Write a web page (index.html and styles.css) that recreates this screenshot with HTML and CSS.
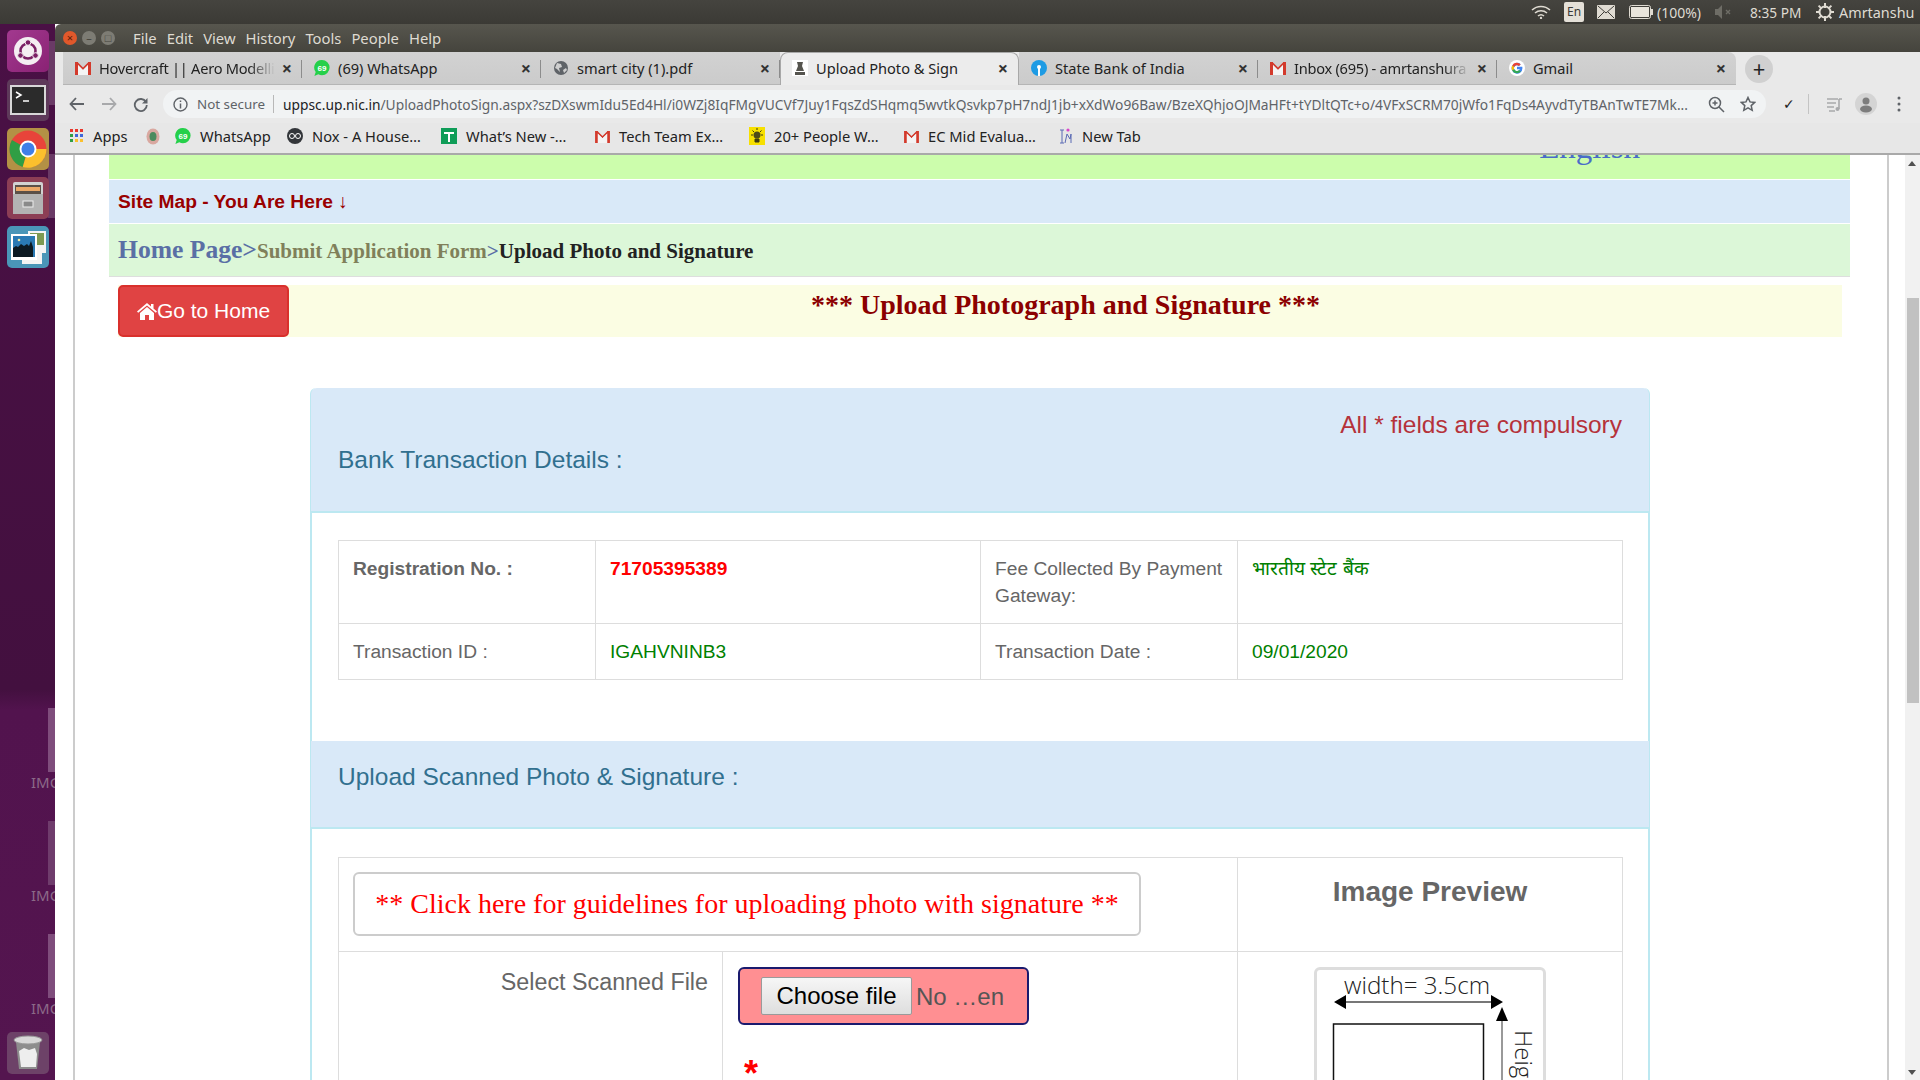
FILE: index.html
```html
<!DOCTYPE html>
<html lang="en">
<head>
    <meta charset="UTF-8">
    <title>Upload Photo &amp; Sign</title>
    <link rel="stylesheet" href="styles.css">
</head>
<body>
    <svg class="defs" width="0" height="0">
        <symbol id="gmail" viewBox="0 0 16 14">
            <path d="M0 1h3v13H0zM13 1h3v13h-3z" fill="#d33a2c"/>
            <path d="M0 1h2.500L8 6.500 13.500 1H16L8 9z" fill="#d33a2c"/>
            <path d="M3 4l5 5 5-5v10H3z" fill="#f4f4f4"/>
        </symbol>
        <symbol id="whatsapp" viewBox="0 0 16 16">
            <path d="M8 0a7.600 7.600 0 0 1 0 15.200c-1.300 0-2.600-.3-3.700-1L.4 16l1.300-3.900A7.600 7.600 0 0 1 8 0z" fill="#25d04a"/>
            <text x="8" y="10.800" text-anchor="middle" font-size="8" font-family="Liberation Sans" fill="#fff" font-weight="bold">69</text>
        </symbol>
    </svg>

    <div class="desktop">
        <div class="topbar">
            <svg class="tray-wifi" width="20" height="14" viewBox="0 0 20 14"><path d="M1 5a13 13 0 0 1 18 0M4 8a9 9 0 0 1 12 0M7 11a4.500 4.500 0 0 1 6 0" fill="none" stroke="#dfdbd2" stroke-width="1.500"/><circle cx="10" cy="13" r="1.200" fill="#dfdbd2"/></svg>
            <span class="tray-lang">En</span>
            <svg class="tray-mail" width="18" height="14" viewBox="0 0 18 14"><rect width="18" height="14" rx="1" fill="#dfdbd2"/><path d="M1 1l8 7 8-7M1 13l6-6M17 13l-6-6" fill="none" stroke="#3f3e39"/></svg>
            <svg class="tray-battery" width="24" height="14" viewBox="0 0 24 14"><rect x=".5" y=".5" width="21" height="13" rx="2" fill="#3f3e39" stroke="#dfdbd2"/><rect x="2" y="2" width="18" height="10" fill="#e9e5dc"/><rect x="22" y="4" width="2" height="6" fill="#dfdbd2"/></svg>
            <span class="tray-text tray-percent">(100%)</span>
            <svg class="tray-volume" width="18" height="14" viewBox="0 0 18 14"><path d="M0 4h3l4-4v14l-4-4H0z" fill="#6e6d66"/><path d="M11 5l4 4M15 5l-4 4" stroke="#6e6d66" stroke-width="1.400"/></svg>
            <span class="tray-text tray-time">8:35 PM</span>
            <svg class="tray-gear" width="18" height="18" viewBox="0 0 18 18"><circle cx="9" cy="9" r="5.500" fill="none" stroke="#dfdbd2" stroke-width="2"/><path d="M9 0v5M9 13v5M0 9h4M14 9h4M2.600 2.600l3 3M12.400 12.400l3 3M15.400 2.600l-3 3M5.600 12.400l-3 3" stroke="#dfdbd2" stroke-width="2"/></svg>
            <span class="tray-text tray-user">Amrtanshu</span>
        </div>

        <div class="workspace">
            <div class="launcher">
                <div class="desk-item item-top1"></div>
                <div class="desk-item item-top2"></div>
                <div class="desk-item item-a"></div>
                <div class="desk-item item-b"></div>
                <div class="desk-item item-c"></div>
                <span class="desk-label label-a">IMG</span>
                <span class="desk-label label-b">IMG</span>
                <span class="desk-label label-c">IMG</span>

                <div class="launch-icon icon-ubuntu">
                    <svg width="30" height="30" viewBox="0 0 30 30"><circle cx="15" cy="15" r="14" fill="#f4eef2"/><circle cx="15" cy="15" r="7.500" fill="none" stroke="#7a1f64" stroke-width="2.600"/><circle cx="15" cy="6.500" r="2.800" fill="#7a1f64" stroke="#f4eef2"/><circle cx="7.500" cy="19.500" r="2.800" fill="#7a1f64" stroke="#f4eef2"/><circle cx="22.500" cy="19.500" r="2.800" fill="#7a1f64" stroke="#f4eef2"/></svg>
                </div>
                <div class="launch-icon icon-terminal">
                    <svg width="36" height="30" viewBox="0 0 36 30"><rect x="1" y="1" width="34" height="28" fill="#2b2b2b" stroke="#d8d8d8" stroke-width="2"/><path d="M6 7l5 3-5 3" fill="none" stroke="#fff" stroke-width="1.500"/><path d="M13 16h6" stroke="#fff" stroke-width="1.500"/></svg>
                </div>
                <div class="launch-icon icon-chrome">
                    <svg width="38" height="38" viewBox="0 0 36 36"><circle cx="18" cy="18" r="17.500" fill="#e8443a"/><path d="M18 18L2.800 9.500A17.500 17.500 0 0 0 13 35z" fill="#2f9e44"/><path d="M18 18h17.500A17.500 17.500 0 0 1 13 35z" fill="#fbc02d"/><circle cx="18" cy="18" r="8" fill="#fff"/><circle cx="18" cy="18" r="6.200" fill="#3f7fe8"/></svg>
                </div>
                <div class="launch-icon icon-files">
                    <svg width="32" height="34" viewBox="0 0 32 34"><rect x="1" y="1" width="30" height="32" rx="2" fill="#d2d2d2"/><rect x="3" y="4" width="26" height="9" fill="#5b5048"/><path d="M4 6h24v4H4z" fill="#eba868"/><path d="M1 13h30v20H1z" fill="#b3b3b3"/><rect x="11" y="20" width="10" height="6" fill="#8a8a8a" stroke="#eee"/></svg>
                </div>
                <div class="launch-icon icon-photos">
                    <svg width="36" height="34" viewBox="0 0 36 34"><rect x="18" y="1" width="18" height="22" fill="#f4f4f4"/><rect x="20" y="3" width="14" height="12" fill="#7d9a52"/><rect x="12" y="16" width="20" height="18" fill="#f4f4f4"/><rect x="1" y="4" width="26" height="26" fill="#fff"/><rect x="3" y="6" width="22" height="21" fill="#2a7ab4"/><circle cx="9" cy="10" r="1.300" fill="#f1e9a2"/><path d="M3 27v-9l3-2 2 1 3-3 3 2 3-2 2 2 2-5 2 6v10z" fill="#0c1a22"/></svg>
                </div>
                <div class="launch-icon icon-trash">
                    <svg width="30" height="36" viewBox="0 0 30 36"><path d="M3 7l3 27h18l3-27z" fill="#8d8d8d"/><ellipse cx="15" cy="5" rx="14" ry="4" fill="#d8d8d8" stroke="#999"/><path d="M6 16l5-3 5 2 6-2 2 6-1 13H8z" fill="#eee"/></svg>
                </div>
            </div>

            <div class="browser">
                <div class="titlebar">
                    <span class="win-btn win-close">&#215;</span>
                    <span class="win-btn win-min">&#8211;</span>
                    <span class="win-btn win-max">&#9633;</span>
                    <nav class="app-menu">
                        <span>File</span><span>Edit</span><span>View</span><span>History</span><span>Tools</span><span>People</span><span>Help</span>
                    </nav>
                </div>

                <div class="tabstrip">
                    <div class="tab">
                        <svg class="tab-icon" width="16" height="14"><use href="#gmail"/></svg>
                        <span class="tab-title fade">Hovercraft || Aero Modelli</span><span class="tab-close">&#215;</span>
                    </div>
                    <div class="tab">
                        <svg class="tab-icon" width="16" height="16"><use href="#whatsapp"/></svg>
                        <span class="tab-title">(69) WhatsApp</span><span class="tab-close">&#215;</span>
                    </div>
                    <div class="tab">
                        <svg class="tab-icon" width="16" height="16" viewBox="0 0 16 16"><circle cx="8" cy="8" r="7" fill="#5f6368"/><path d="M4 3l4 1 1 3-3 1 1 4-3-3-2-1zM10 10l3-2 1 2-3 3z" fill="#cfcfcf"/></svg>
                        <span class="tab-title">smart city (1).pdf</span><span class="tab-close">&#215;</span>
                    </div>
                    <div class="tab tab-active">
                        <svg class="tab-icon" width="16" height="16" viewBox="0 0 16 16"><rect width="16" height="16" fill="#fff"/><path d="M5 2h6l-1 4 2 5H4l2-5zM3 12h10v3H3z" fill="#55544e"/></svg>
                        <span class="tab-title">Upload Photo &amp; Sign</span><span class="tab-close">&#215;</span>
                    </div>
                    <div class="tab">
                        <svg class="tab-icon" width="16" height="16" viewBox="0 0 16 16"><circle cx="8" cy="8" r="8" fill="#1e9be4"/><circle cx="8" cy="7" r="2" fill="#fff"/><rect x="7" y="8" width="2" height="8" fill="#fff"/></svg>
                        <span class="tab-title">State Bank of India</span><span class="tab-close">&#215;</span>
                    </div>
                    <div class="tab">
                        <svg class="tab-icon" width="16" height="14"><use href="#gmail"/></svg>
                        <span class="tab-title fade">Inbox (695) - amrtanshura</span><span class="tab-close">&#215;</span>
                    </div>
                    <div class="tab tab-last">
                        <svg class="tab-icon" width="16" height="16" viewBox="0 0 16 16"><circle cx="8" cy="8" r="8" fill="#fff"/><path d="M13 6.800H8v2.500h2.800a3 3 0 1 1-.8-3.300l1.700-1.700A5.400 5.400 0 1 0 13.400 8c0-.4 0-.8-.1-1.200z" fill="#4285f4"/><path d="M3.200 5.400l2 1.500A3 3 0 0 1 10 6l1.700-1.700a5.400 5.400 0 0 0-8.500 1.100z" fill="#ea4335"/><path d="M3.200 10.600l2-1.500a3 3 0 0 0 4.900 1l1.800 1.500a5.400 5.400 0 0 1-8.700-1z" fill="#34a853"/><path d="M2.600 8c0-1 .2-1.800.6-2.600l2 1.500a3 3 0 0 0 0 2.200l-2 1.500A5.400 5.400 0 0 1 2.600 8z" fill="#fbbc05"/></svg>
                        <span class="tab-title">Gmail</span><span class="tab-close">&#215;</span>
                    </div>
                    <span class="newtab">+</span>
                </div>

                <div class="toolbar">
                    <svg class="tool-back" width="16" height="14" viewBox="0 0 16 14"><path d="M15 7H2M7 1L1.500 7 7 13" fill="none" stroke="#5f6368" stroke-width="1.800"/></svg>
                    <svg class="tool-forward" width="16" height="14" viewBox="0 0 16 14"><path d="M1 7h13M9 1l5.500 6L9 13" fill="none" stroke="#a8a9ab" stroke-width="1.800"/></svg>
                    <svg class="tool-reload" width="15" height="15" viewBox="0 0 15 15"><path d="M13 5a6 6 0 1 0 .8 3" fill="none" stroke="#5f6368" stroke-width="1.800"/><path d="M14.500 1v5.500H9z" fill="#5f6368"/></svg>
                    <div class="omnibox">
                        <svg class="omni-info" width="15" height="15" viewBox="0 0 15 15"><circle cx="7.500" cy="7.500" r="6.500" fill="none" stroke="#5f6368" stroke-width="1.400"/><path d="M7.500 6.500v5M7.500 3.500v1.600" stroke="#5f6368" stroke-width="1.500"/></svg>
                        <span class="omni-secure">Not secure</span>
                        <span class="omni-url"><b>uppsc.up.nic.in</b>/UploadPhotoSign.aspx?szDXswmIdu5Ed4Hl/i0WZj8IqFMgVUCVf7Juy1FqsZdSHqmq5wvtkQsvkp7pH7ndJ1jb+xXdWo96Baw/BzeXQhjoOJMaHFt+tYDltQTc+o/4VFxSCRM70jWfo1FqDs4AyvdTyTBAnTwTE7Mk...</span>
                        <svg class="omni-zoom" width="17" height="17" viewBox="0 0 17 17"><circle cx="7" cy="7" r="5.500" fill="none" stroke="#5f6368" stroke-width="1.500"/><path d="M11 11l5 5M4.500 7h5M7 4.500v5" stroke="#5f6368" stroke-width="1.500"/></svg>
                        <svg class="omni-star" width="16" height="16" viewBox="0 0 16 16"><path d="M8 1.500l2 4.400 4.700.5-3.500 3.200 1 4.700L8 11.900l-4.200 2.400 1-4.700L1.300 6.400 6 5.900z" fill="none" stroke="#5f6368" stroke-width="1.500"/></svg>
                    </div>
                    <span class="tool-check">&#10003;</span>
                    <span class="tool-sep"></span>
                    <svg class="tool-media" width="16" height="15" viewBox="0 0 16 15"><path d="M0 2h11M0 6h9M0 10h7M2 14h6M12 2h3M12 2v10" fill="none" stroke="#a8a9ab" stroke-width="1.600"/><circle cx="10.500" cy="12" r="2" fill="#a8a9ab"/></svg>
                    <svg class="tool-avatar" width="22" height="22" viewBox="0 0 22 22"><circle cx="11" cy="11" r="11" fill="#d4d4d4"/><circle cx="11" cy="8" r="3.500" fill="#7d7d7d"/><ellipse cx="11" cy="16" rx="6" ry="3.500" fill="#7d7d7d"/></svg>
                    <svg class="tool-dots" width="4" height="16" viewBox="0 0 4 16"><circle cx="2" cy="2" r="1.500" fill="#5f6368"/><circle cx="2" cy="8" r="1.500" fill="#5f6368"/><circle cx="2" cy="14" r="1.500" fill="#5f6368"/></svg>
                </div>

                <div class="bookmarks">
                    <span class="bookmark bm-apps">
                        <svg width="14" height="14" viewBox="0 0 14 14"><path d="M0 0h3v3H0z" fill="#e8372c"/><path d="M5 0h3v3H5z" fill="#e8372c"/><path d="M10 0h3v3h-3z" fill="#e8372c"/><path d="M0 5h3v3H0z" fill="#2f9e44"/><path d="M5 5h3v3H5z" fill="#3f66d8"/><path d="M10 5h3v3h-3z" fill="#3f66d8"/><path d="M0 10h3v3H0z" fill="#2f9e44"/><path d="M5 10h3v3H5z" fill="#fbc02d"/><path d="M10 10h3v3h-3z" fill="#fbc02d"/></svg>
                        Apps
                    </span>
                    <span class="bookmark bm-emblem">
                        <svg width="14" height="17" viewBox="0 0 14 17"><ellipse cx="7" cy="8.500" rx="6.500" ry="8" fill="#d9a8a0"/><ellipse cx="7" cy="8.500" rx="3.500" ry="4.500" fill="#4d8b5e"/></svg>
                    </span>
                    <span class="bookmark bm-whatsapp"><svg width="16" height="16"><use href="#whatsapp"/></svg>WhatsApp</span>
                    <span class="bookmark bm-nox">
                        <svg width="16" height="16" viewBox="0 0 16 16"><circle cx="8" cy="8" r="8" fill="#33363a"/><circle cx="5" cy="8" r="2.500" fill="none" stroke="#fff"/><circle cx="11" cy="8" r="2.500" fill="none" stroke="#fff"/></svg>
                        Nox - A House…
                    </span>
                    <span class="bookmark bm-sheet">
                        <svg width="16" height="16" viewBox="0 0 16 16"><rect width="16" height="16" fill="#0f9d58"/><path d="M3 5h10M8 5v9" stroke="#fff" stroke-width="2"/></svg>
                        What’s New -…
                    </span>
                    <span class="bookmark bm-tech"><svg width="15" height="13"><use href="#gmail"/></svg>Tech Team Ex…</span>
                    <span class="bookmark bm-bulb">
                        <svg width="16" height="18" viewBox="0 0 16 18"><rect width="16" height="18" fill="#f7e000"/><circle cx="8" cy="8" r="3.500" fill="#4f4a18"/><path d="M6 12h4v3H6zM8 1v2M2 8h2M12 8h2M3.500 3.500l1.500 1.500M12.500 3.500L11 5" stroke="#3d3a12" fill="#3d3a12"/></svg>
                        20+ People W…
                    </span>
                    <span class="bookmark bm-ec"><svg width="15" height="13"><use href="#gmail"/></svg>EC Mid Evalua…</span>
                    <span class="bookmark bm-newtab">
                        <svg width="14" height="17" viewBox="0 0 14 17"><path d="M1 2h4M3 2v13M1 15h4M6 15l2-9 3 5 1-5v9" fill="none" stroke="#5a6ab4"/><circle cx="9" cy="2" r="1.600" fill="#d946c8"/></svg>
                        New Tab
                    </span>
                </div>

                <div class="viewport">
                    <div class="page">
                        <div class="lang-strip"><a class="lang-link">English</a></div>
                        <div class="sitemap-strip">Site Map - You Are Here ↓</div>
                        <div class="crumb-strip">
                            <span class="crumb-home">Home Page&gt;</span><span class="crumb-submit">Submit Application Form</span><span class="crumb-sep">&gt;</span><span class="crumb-current">Upload Photo and Signature</span>
                        </div>
                        <div class="title-row">
                            <button class="home-btn">
                                <svg width="20" height="18" viewBox="0 0 20 18"><path d="M10 1L0 9.500l1.200 1.300L10 3.400l8.800 7.400L20 9.500 16.500 6.500V2h-2.500v2.400z" fill="#fff"/><path d="M3 11l7-6 7 6v7h-5v-5H8v5H3z" fill="#fff"/></svg>Go to Home
                            </button>
                            <h2 class="page-title">*** Upload Photograph and Signature ***</h2>
                        </div>

                        <div class="panel">
                            <div class="panel-head head-bank">
                                <div class="compulsory">All * fields are compulsory</div>
                                <div class="panel-title">Bank Transaction Details :</div>
                            </div>
                            <div class="panel-body body-bank">
                                <table class="info-table">
                                    <colgroup>
                                        <col class="col-label">
                                        <col class="col-value">
                                        <col class="col-label">
                                        <col class="col-value">
                                    </colgroup>
                                    <tr class="row-tall">
                                        <td><b>Registration No. :</b></td>
                                        <td class="val-red">71705395389</td>
                                        <td>Fee Collected By Payment Gateway:</td>
                                        <td class="val-green">भारतीय स्टेट बैंक</td>
                                    </tr>
                                    <tr class="row-short">
                                        <td>Transaction ID :</td>
                                        <td class="val-green">IGAHVNINB3</td>
                                        <td>Transaction Date :</td>
                                        <td class="val-green">09/01/2020</td>
                                    </tr>
                                </table>
                            </div>
                            <div class="panel-head head-upload">
                                <div class="panel-title">Upload Scanned Photo &amp; Signature :</div>
                            </div>
                            <div class="panel-body body-upload">
                                <table class="upload-table">
                                    <colgroup>
                                        <col class="col-file-label">
                                        <col class="col-file">
                                        <col class="col-preview">
                                    </colgroup>
                                    <tr class="row-guide">
                                        <td colspan="2"><a class="guide-btn">** Click here for guidelines for uploading photo with signature **</a></td>
                                        <td class="preview-head">Image Preview</td>
                                    </tr>
                                    <tr>
                                        <td class="file-label">Select Scanned File</td>
                                        <td class="file-cell">
                                            <div class="file-box"><button class="file-btn">Choose file</button><span class="file-name">No …en</span></div>
                                            <div class="required">*</div>
                                        </td>
                                        <td class="preview-cell">
                                            <div class="preview-box">
                                                <svg width="226" height="200" viewBox="0 0 226 200">
                                                    <text x="27" y="24" class="spec-text" textLength="146" lengthAdjust="spacingAndGlyphs">width= 3.5cm</text>
                                                    <path d="M28 32h150" stroke="#777" stroke-width="2"/>
                                                    <path d="M17 32l12-7v14zM186 32l-12-7v14z" fill="#000"/>
                                                    <path d="M185 45v155" stroke="#777" stroke-width="1.500"/>
                                                    <path d="M185 37l-6 14h12z" fill="#000"/>
                                                    <rect x="16.500" y="54" width="150" height="160" fill="#fff" stroke="#111" stroke-width="1.500"/>
                                                    <text x="198" y="60" class="spec-text" transform="rotate(90 198 60)">Height</text>
                                                </svg>
                                            </div>
                                        </td>
                                    </tr>
                                </table>
                            </div>
                        </div>
                    </div>
                    <div class="scrollbar">
                        <span class="scroll-up"></span>
                        <span class="scroll-thumb"></span>
                        <span class="scroll-down"></span>
                    </div>
                </div>
            </div>
        </div>
    </div>
</body>
</html>
```

FILE: styles.css
```css
html, body {
    margin: 0;
    padding: 0;
    height: 100%;
    overflow: hidden;
}
body {
    font-family: 'Liberation Sans', Arial, sans-serif;
    background-color: #fff;
}
.defs {
    position: absolute;
}
.desktop {
    width: 1920px;
    height: 1080px;
    display: flex;
    flex-direction: column;
    overflow: hidden;
}

/* top panel */
.topbar {
    height: 24px;
    flex: none;
    display: flex;
    align-items: center;
    background: linear-gradient(#45443f, #3b3a35);
    font-family: 'Noto Sans', sans-serif;
    padding-left: 1531px;
}
.tray-text {
    color: #dfdbd2;
    font-size: 14px;
    white-space: nowrap;
}
.tray-lang {
    margin-left: 13px;
    width: 20px;
    height: 20px;
    background-color: #e4e0d8;
    color: #3c3b37;
    font-size: 12px;
    text-align: center;
    line-height: 20px;
    border-radius: 2px;
}
.tray-mail { margin-left: 13px; }
.tray-battery { margin-left: 14px; }
.tray-percent { margin-left: 4px; width: 46px; }
.tray-volume { margin-left: 12px; }
.tray-time { margin-left: 17px; width: 54px; font-size: 13.7px; }
.tray-gear { margin-left: 12px; }
.tray-user { margin-left: 5px; font-size: 14.4px; }

.workspace {
    flex: 1;
    display: flex;
    min-height: 0;
}

/* launcher */
.launcher {
    width: 55px;
    flex: none;
    position: relative;
    box-sizing: border-box;
    padding: 6px 0 0 7px;
    overflow: hidden;
    background: linear-gradient(#4a1045 0, #43103f 63%, #52134e 65%, #54154f 100%);
}
.launch-icon {
    width: 42px;
    height: 42px;
    margin-bottom: 7px;
    border-radius: 5px;
    display: flex;
    align-items: center;
    justify-content: center;
    position: relative;
}
.icon-ubuntu { background: linear-gradient(135deg, #a2398f, #8a2274); }
.icon-terminal { background-color: #5e3a5a; }
.icon-chrome { background-color: #b39145; }
.icon-files { background-color: #8c3e55; }
.icon-photos { background-color: #4a96b8; }
.icon-trash {
    background-color: #6d4268;
    position: absolute;
    left: 7px;
    top: 1008px;
}
.desk-item {
    position: absolute;
    left: 48px;
    width: 7px;
    height: 64px;
    background-color: #7f4d7c;
}
.item-top1 { top: 17px; background-color: #6a3a66; }
.item-top2 { top: 130px; background-color: #6a3a66; }
.item-a { top: 684px; }
.item-b { top: 797px; background-color: #6f3c6c; }
.item-c { top: 910px; }
.desk-label {
    position: absolute;
    left: 31px;
    font-family: 'Noto Sans', sans-serif;
    font-size: 15px;
    color: #8b6a88;
}
.label-a { top: 748px; }
.label-b { top: 861px; }
.label-c { top: 974px; }

/* browser window */
.browser {
    flex: 1;
    display: flex;
    flex-direction: column;
    min-width: 0;
    font-family: 'Noto Sans', sans-serif;
}
.titlebar {
    height: 28px;
    flex: none;
    display: flex;
    align-items: center;
    background: linear-gradient(#57564e, #45443d);
    border-radius: 6px 0 0 0;
    box-sizing: border-box;
    padding-left: 8px;
}
.win-btn {
    width: 14px;
    height: 14px;
    border-radius: 50%;
    margin-right: 5px;
    background-color: #7d7c74;
    color: #45443d;
    font-size: 11px;
    line-height: 14px;
    text-align: center;
}
.win-close { background-color: #e0582b; color: #5c1d08; }
.app-menu {
    margin-left: 13px;
    display: flex;
    gap: 10px;
    color: #dfdbd2;
    font-size: 14.8px;
}
.tabstrip {
    height: 33px;
    flex: none;
    display: flex;
    align-items: center;
    padding-left: 8px;
    background-color: #e9e9e9;
}
.tab {
    width: 239px;
    height: 33px;
    flex: none;
    box-sizing: border-box;
    display: flex;
    align-items: center;
    padding: 0 8px 0 12px;
    background: linear-gradient(#d2d2d2, #cbcbcb);
    border-bottom: 1px solid #b5b5b5;
    position: relative;
    color: #222;
    font-size: 14.6px;
}
.tab::after {
    content: "";
    position: absolute;
    right: 0;
    top: 8px;
    height: 18px;
    width: 1px;
    background-color: #8c8c8c;
}
.tab-last::after, .tab-active::after { display: none; }
.tab-last { border-radius: 0 8px 0 0; }
.tab-active {
    background: #ececec;
    border: 1px solid #a8a8a8;
    border-bottom: none;
    border-radius: 8px 8px 0 0;
    padding-bottom: 2px;
    padding-left: 11px;
}
.tab-icon {
    flex: none;
    margin-right: 8px;
}
.tab-title {
    flex: 1;
    overflow: hidden;
    white-space: nowrap;
}
.fade {
    letter-spacing: -0.25px;
    -webkit-mask-image: linear-gradient(to right, #000 85%, transparent 100%);
    mask-image: linear-gradient(to right, #000 85%, transparent 100%);
}
.tab-close {
    flex: none;
    width: 14px;
    margin-left: 5px;
    font-size: 18px;
    line-height: 18px;
    text-align: center;
    font-weight: bold;
    color: #333;
}
.newtab {
    width: 28px;
    height: 28px;
    margin-left: 9px;
    border-radius: 50%;
    background-color: #d0d0d0;
    text-align: center;
    font-size: 22px;
    line-height: 26px;
    color: #222;
}
.toolbar {
    height: 38px;
    flex: none;
    box-sizing: border-box;
    display: flex;
    align-items: center;
    background-color: #e9e9e9;
    padding-left: 14px;
}
.tool-forward { margin-left: 16px; }
.tool-reload { margin-left: 16px; }
.omnibox {
    width: 1603px;
    height: 28px;
    margin-left: 15px;
    box-sizing: border-box;
    flex: none;
    border-radius: 14px;
    background-color: #f1f3f4;
    display: flex;
    align-items: center;
    padding-left: 10px;
    white-space: nowrap;
}
.omni-secure {
    margin-left: 9px;
    padding-right: 8px;
    border-right: 1px solid #b8b8b8;
    color: #5f6368;
    font-size: 13.4px;
    line-height: 18px;
}
.omni-url {
    margin-left: 9px;
    width: 1408px;
    flex: none;
    overflow: hidden;
    color: #5f6368;
    font-size: 13.78px;
}
.omni-url b {
    font-weight: normal;
    color: #202124;
}
.omni-zoom { margin-left: 17px; }
.omni-star { margin-left: 15px; }
.tool-check {
    margin-left: 17px;
    font-size: 14px;
    color: #222;
    font-family: 'DejaVu Sans', sans-serif;
}
.tool-sep {
    margin-left: 13px;
    width: 1px;
    height: 20px;
    background-color: #c4c4c4;
}
.tool-media { margin-left: 18px; }
.tool-avatar { margin-left: 12px; }
.tool-dots { margin-left: 20px; }
.bookmarks {
    height: 32px;
    flex: none;
    box-sizing: border-box;
    display: flex;
    align-items: center;
    background-color: #e7e7e7;
    border-bottom: 2px solid #a9a9a9;
    padding-bottom: 4px;
    font-size: 14.7px;
    color: #222;
    white-space: nowrap;
}
.bookmark {
    display: flex;
    align-items: center;
    gap: 9px;
    flex: none;
}
.bm-apps { margin-left: 15px; width: 76px; }
.bm-emblem { width: 29px; }
.bm-whatsapp { width: 112px; }
.bm-nox { width: 154px; }
.bm-sheet { width: 154px; }
.bm-tech { width: 154px; }
.bm-bulb { width: 155px; }
.bm-ec { width: 155px; }

/* page */
.viewport {
    flex: 1;
    min-height: 0;
    display: flex;
    background-color: #fff;
    font-family: 'Liberation Sans', Arial, sans-serif;
}
.page {
    width: 1816px;
    margin-left: 18px;
    flex: none;
    box-sizing: border-box;
    border-left: 2px solid #cccccc;
    border-right: 2px solid #cccccc;
    padding: 0 37px 0 34px;
    overflow: hidden;
}
.lang-strip {
    height: 24px;
    background-color: #ccfdac;
    display: flex;
    justify-content: flex-end;
    align-items: flex-end;
    overflow: hidden;
    padding-right: 210px;
    box-sizing: border-box;
}
.lang-link {
    font-family: 'Liberation Serif', serif;
    font-size: 33px;
    line-height: 20px;
    margin-bottom: 22px;
    color: #4a6cc8;
    flex: none;
}
.sitemap-strip {
    height: 43px;
    margin-top: 1px;
    background-color: #d9e9f8;
    padding-left: 9px;
    line-height: 43px;
    font-size: 19.2px;
    font-weight: bold;
    color: #990000;
}
.crumb-strip {
    height: 53px;
    margin-top: 1px;
    box-sizing: border-box;
    background-color: #dcf7d8;
    border-bottom: 1px solid #dedede;
    padding-left: 9px;
    line-height: 52px;
    font-family: 'Liberation Serif', serif;
    font-weight: bold;
    white-space: nowrap;
}
.crumb-home {
    font-size: 25.6px;
    color: #5a6fa5;
}
.crumb-submit {
    font-size: 21px;
    color: #80805a;
}
.crumb-sep {
    font-size: 21px;
    color: #5a6fa5;
}
.crumb-current {
    font-size: 21px;
    color: #222;
}
.title-row {
    display: flex;
    margin: 8px 8px 0 9px;
    height: 52px;
    background-color: #fbfde3;
}
.home-btn {
    width: 171px;
    height: 52px;
    flex: none;
    box-sizing: border-box;
    border: 2px solid #d9302c;
    border-radius: 5px;
    background-color: #e04343;
    color: #fff;
    font-family: 'Liberation Sans', Arial, sans-serif;
    font-size: 21px;
    display: flex;
    align-items: center;
    justify-content: center;
    padding: 0;
}
.page-title {
    flex: 1;
    margin: 0;
    text-align: center;
    font-family: 'Liberation Serif', serif;
    font-size: 28px;
    line-height: 40px;
    color: #8b0000;
    font-weight: bold;
}
.panel {
    margin: 51px 0 0 201px;
    width: 1340px;
    box-sizing: border-box;
    border: 2px solid #bce8f1;
    border-top: none;
    border-radius: 6px 6px 0 0;
}
.panel-head {
    background-color: #d9e9f8;
    margin: 0 -1px;
    padding: 0 27px;
    box-sizing: border-box;
    color: #31708f;
    font-size: 24.5px;
}
.head-bank {
    height: 125px;
    border-radius: 6px 6px 0 0;
    border-bottom: 2px solid #bce8f1;
    padding-top: 23px;
}
.compulsory {
    text-align: right;
    color: #b5323a;
    line-height: 28px;
}
.head-bank .panel-title {
    margin-top: 7px;
    line-height: 28px;
}
.head-upload {
    height: 88px;
    border-bottom: 2px solid #bce8f1;
    line-height: 71px;
}
.panel-body {
    padding: 27px 26px 0;
}
.body-bank {
    height: 228px;
    box-sizing: border-box;
}
.body-upload {
    padding-top: 28px;
}
.info-table, .upload-table {
    width: 1284px;
    border-collapse: collapse;
    table-layout: fixed;
    font-size: 19.2px;
    color: #666;
}
.info-table td, .upload-table td {
    border: 1px solid #dddddd;
    padding: 9px 14px;
    line-height: 27px;
    vertical-align: top;
    box-sizing: border-box;
}
.info-table td { padding-top: 14px; }
.col-label { width: 257px; }
.col-value { width: 385px; }
.row-tall td { height: 83px; }
.info-table tr.row-short td { height: 56px; padding-bottom: 0; }
.val-red {
    color: #ff0000;
    font-weight: bold;
}
.val-green { color: #008000; }
.col-file-label { width: 384px; }
.col-file { width: 515px; }
.col-preview { width: 385px; }
.upload-table tr.row-guide td { height: 94px; padding-top: 14px; }
.guide-btn {
    display: block;
    width: 788px;
    height: 64px;
    box-sizing: border-box;
    border: 2px solid #cccccc;
    border-radius: 6px;
    font-family: 'Liberation Serif', serif;
    font-size: 28px;
    line-height: 60px;
    text-align: center;
    color: #ff0000;
    white-space: nowrap;
}
.preview-head {
    text-align: center;
    font-size: 28px;
    font-weight: bold;
    color: #666;
}
.upload-table tr.row-guide td.preview-head { padding-top: 20px; }
.file-label {
    text-align: right;
    font-size: 23.3px;
    color: #666;
}
.upload-table .file-label { padding-top: 17px; }
.upload-table .file-cell, .upload-table .preview-cell { padding-top: 15px; }
.upload-table .file-cell { padding-left: 15px; }
.file-box {
    width: 291px;
    height: 58px;
    box-sizing: border-box;
    border: 2px solid #1a1a6e;
    border-radius: 6px;
    background-color: #ff8f92;
    display: flex;
    align-items: center;
    padding-left: 21px;
}
.file-btn {
    width: 151px;
    height: 38px;
    flex: none;
    border: 1px solid #9a9a9a;
    border-radius: 2px;
    background: linear-gradient(#f6f6f6, #dedede);
    font-family: 'Liberation Sans', Arial, sans-serif;
    font-size: 24px;
    color: #000;
    padding: 0;
}
.file-name {
    margin-left: 4px;
    font-size: 24px;
    color: #555;
}
.required {
    margin-top: 37px;
    color: #ff0000;
    font-size: 36px;
    font-weight: bold;
    padding-left: 6px;
    line-height: 24px;
}
.preview-cell { text-align: center; }
.preview-box {
    width: 232px;
    height: 240px;
    margin: 0 auto;
    box-sizing: border-box;
    border: 3px solid #dddddd;
    border-radius: 6px;
}
.spec-text {
    font-family: 'Open Sans', sans-serif;
    font-weight: 300;
    font-size: 24px;
    fill: #222;
}

/* scrollbar */
.scrollbar {
    width: 15px;
    margin-left: 16px;
    flex: none;
    background-color: #f1f1f1;
    position: relative;
}
.scroll-up, .scroll-down {
    position: absolute;
    left: 3px;
    width: 0;
    height: 0;
    border-left: 4px solid transparent;
    border-right: 4px solid transparent;
}
.scroll-up {
    top: 6px;
    border-bottom: 5px solid #505050;
}
.scroll-down {
    bottom: 5px;
    border-top: 5px solid #505050;
}
.scroll-thumb {
    position: absolute;
    left: 2px;
    top: 143px;
    width: 12px;
    height: 405px;
    background-color: #c1c1c1;
}
```
